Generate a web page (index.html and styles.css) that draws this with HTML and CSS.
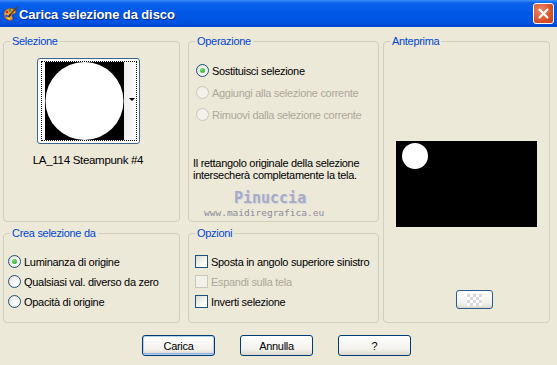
FILE: index.html
```html
<!DOCTYPE html>
<html lang="it">
  <head>
    <title>Carica selezione da disco</title>
    <meta charset="UTF-8" />
    <link rel="stylesheet" href="styles.css">
  </head>

  <body>
    <div class="window">
      <header class="titlebar">
        <span class="title-left">
          <svg class="app-icon" width="16" height="16" viewBox="0 0 16 16">
            <path d="M2 8 C2 3 9 1 13 4 C15 6 13 8 11 8 C9 8 10 11 11 12 C11 14 8 15 6 14 C3 13 2 11 2 8 Z" fill="#e8a050" stroke="#8a4a10" stroke-width="0.8"/>
            <circle cx="5" cy="6" r="1.3" fill="#e02020"/>
            <circle cx="8" cy="4.5" r="1.2" fill="#20a030"/>
            <circle cx="4.5" cy="10" r="1.3" fill="#2050e0"/>
            <circle cx="7" cy="12.2" r="1" fill="#f0e020"/>
            <path d="M15 1 L8 9" stroke="#704010" stroke-width="1.6"/>
            <path d="M8.5 8.5 L6.5 11" stroke="#303030" stroke-width="2"/>
          </svg>
          <span class="title">Carica selezione da disco</span>
        </span>
        <span class="close-btn">
          <svg width="13" height="13" viewBox="0 0 13 13">
            <path d="M2 2 L11 11 M11 2 L2 11" stroke="#fff" stroke-width="2.2"/>
          </svg>
        </span>
      </header>

      <div class="content">
        <div class="groups">
          <div class="group group-selezione">
            <span class="caption">Selezione</span>
            <div class="thumb">
              <div class="thumb-focus">
                <svg class="thumb-image" width="79" height="78" viewBox="0 0 79 78">
                  <rect width="79" height="78" fill="#000"/>
                  <circle cx="39.5" cy="39" r="39" fill="#fff"/>
                </svg>
                <span class="thumb-strip"><span class="thumb-arrow"></span></span>
              </div>
            </div>
            <div class="thumb-label">LA_114 Steampunk #4</div>
          </div>

          <div class="group group-operazione">
            <span class="caption">Operazione</span>
            <label class="option"><span class="radio checked"></span>Sostituisci selezione</label>
            <label class="option disabled"><span class="radio"></span>Aggiungi alla selezione corrente</label>
            <label class="option disabled"><span class="radio"></span>Rimuovi dalla selezione corrente</label>
            <p class="info">
              Il rettangolo originale della selezione<br />
              intersecherà completamente la tela.
            </p>
          </div>

          <div class="group group-anteprima">
            <span class="caption">Anteprima</span>
            <svg class="preview" width="141" height="86" viewBox="0 0 141 86">
              <rect width="141" height="86" fill="#000"/>
              <circle cx="19" cy="15" r="13" fill="#fff"/>
            </svg>
            <span class="xp-button preview-btn">
              <svg width="15" height="12" viewBox="0 0 15 12">
                <rect width="15" height="12" fill="#ffffff"/>
                <rect x="0" y="0" width="3" height="3" fill="#d8d8d8"/>
                <rect x="6" y="0" width="3" height="3" fill="#d8d8d8"/>
                <rect x="12" y="0" width="3" height="3" fill="#d8d8d8"/>
                <rect x="3" y="3" width="3" height="3" fill="#d8d8d8"/>
                <rect x="9" y="3" width="3" height="3" fill="#d8d8d8"/>
                <rect x="0" y="6" width="3" height="3" fill="#d8d8d8"/>
                <rect x="6" y="6" width="3" height="3" fill="#d8d8d8"/>
                <rect x="12" y="6" width="3" height="3" fill="#d8d8d8"/>
                <rect x="3" y="9" width="3" height="3" fill="#d8d8d8"/>
                <rect x="9" y="9" width="3" height="3" fill="#d8d8d8"/>
              </svg>
            </span>
          </div>

          <div class="group group-crea">
            <span class="caption">Crea selezione da</span>
            <label class="option"><span class="radio checked"></span>Luminanza di origine</label>
            <label class="option"><span class="radio"></span>Qualsiasi val. diverso da zero</label>
            <label class="option"><span class="radio"></span>Opacità di origine</label>
          </div>

          <div class="group group-opzioni">
            <span class="caption">Opzioni</span>
            <label class="option"><span class="check"></span>Sposta in angolo superiore sinistro</label>
            <label class="option disabled"><span class="check"></span>Espandi sulla tela</label>
            <label class="option"><span class="check"></span>Inverti selezione</label>
          </div>
        </div>

        <div class="buttons">
          <span class="xp-button default">Carica</span>
          <span class="xp-button">Annulla</span>
          <span class="xp-button">?</span>
        </div>
      </div>

      <div class="watermark">
        <span class="wm-name">Pinuccia</span>
        <span class="wm-site">www.maidiregrafica.eu</span>
      </div>
    </div>
  </body>
</html>
```

FILE: styles.css
```css
body {
  margin: 0;
  background: #ece9d8;
  font-family: "Liberation Sans", Arial, sans-serif;
  font-size: 11px;
  letter-spacing: -0.3px;
  color: #000;
}

.window {
  position: relative;
  width: 557px;
  height: 365px;
  overflow: hidden;
}

/* title bar */
.titlebar {
  box-sizing: border-box;
  height: 27px;
  display: flex;
  align-items: center;
  justify-content: space-between;
  padding: 0 3px 0 2px;
  background: linear-gradient(
    to bottom,
    #3d8ef8 0px,
    #0b61ec 3px,
    #0058e8 45%,
    #0052e0 85%,
    #0042cc 100%
  );
}

.title-left {
  display: flex;
  align-items: center;
}

.app-icon {
  margin-right: 1px;
  margin-top: 1px;
}

.title {
  color: #fff;
  font-weight: bold;
  font-size: 13px;
  letter-spacing: -0.1px;
  text-shadow: 1px 1px 0 #0a2a8a;
  margin-top: 1px;
}

.close-btn {
  box-sizing: border-box;
  width: 21px;
  height: 21px;
  border: 1px solid #fff;
  border-radius: 3px;
  background: radial-gradient(circle at 35% 35%, #f08a66, #d9532c 60%, #c2401e);
  display: flex;
  align-items: center;
  justify-content: center;
}

/* body */
.content {
  padding: 14px 7px 0 3px;
}

.groups {
  display: grid;
  grid-template-columns: 185px 195px 167px;
  grid-template-rows: 181px 90px;
  row-gap: 11px;
}

.group {
  position: relative;
  box-sizing: border-box;
  border: 1px solid #d0d0bf;
  border-radius: 4px;
}

.caption {
  position: absolute;
  top: -7px;
  left: 6px;
  padding: 0 2px;
  line-height: 13px;
  background: #ece9d8;
  color: #0046d5;
}

.group-selezione {
  width: 177px;
  display: flex;
  flex-direction: column;
  align-items: center;
  padding: 16px 7px 0 0;
}

.group-operazione {
  width: 191px;
  padding: 22px 0 0 7px;
}

.group-anteprima {
  grid-row: 1 / span 2;
  grid-column: 3;
  display: flex;
  flex-direction: column;
  align-items: flex-start;
  padding: 99px 0 0 12px;
}

.group-crea {
  width: 177px;
  padding: 21px 0 0 4px;
}

.group-opzioni {
  width: 191px;
  padding: 21px 0 0 6px;
}

/* selection thumbnail */
.thumb {
  box-sizing: border-box;
  width: 103px;
  height: 86px;
  border: 1px solid #3c6591;
  border-radius: 3px;
  background: #fff;
  padding: 2px 2px 2px 3px;
}

.thumb-focus {
  box-sizing: border-box;
  height: 100%;
  border: 1px dotted #000;
  display: flex;
  padding-left: 3px;
}

.thumb-image {
  display: block;
}

.thumb-strip {
  flex: 1;
  position: relative;
  background: linear-gradient(to right, #eeeeee, #fafafa);
}

.thumb-arrow {
  position: absolute;
  right: 1px;
  top: 36px;
  border-left: 3px solid transparent;
  border-right: 3px solid transparent;
  border-top: 3px solid #000;
}

.thumb-label {
  margin-top: 10px;
  line-height: 13px;
  font-size: 11.5px;
}

/* radios and checkboxes */
.option {
  display: flex;
  align-items: center;
  height: 13px;
  gap: 3px;
  margin-bottom: 7px;
}

.group-operazione .option {
  margin-bottom: 9px;
}

.option.disabled {
  color: #aca899;
}

.radio {
  box-sizing: border-box;
  width: 13px;
  height: 13px;
  border-radius: 50%;
  border: 1px solid #1c5180;
  background: radial-gradient(circle at 65% 65%, #ffffff 20%, #e4e2da 80%, #d0cdc0);
  display: flex;
  align-items: center;
  justify-content: center;
}

.radio.checked::after {
  content: "";
  width: 5px;
  height: 5px;
  border-radius: 50%;
  background: radial-gradient(circle at 35% 35%, #6fe06f, #21a121);
}

.disabled .radio,
.disabled .check {
  border-color: #cac8bb;
  background: #f2f1ea;
}

.check {
  box-sizing: border-box;
  width: 13px;
  height: 13px;
  border: 1px solid #1c5180;
  background: linear-gradient(135deg, #dcdbd3, #ffffff 80%);
}

.info {
  margin: 36px 0 0 -3px;
  line-height: 12px;
}

/* buttons */
.xp-button {
  box-sizing: border-box;
  display: flex;
  align-items: center;
  justify-content: center;
  width: 73px;
  height: 21px;
  border: 1px solid #003c74;
  border-radius: 3px;
  background: linear-gradient(to bottom, #ffffff, #f2f1ec 70%, #dcd8cb);
}

.xp-button.default {
  box-shadow: inset 0 0 0 1px #b8cff2, inset 0 -1px 0 1px #8fb1e6;
}

.buttons {
  display: flex;
  gap: 25px;
  margin: 12px 0 0 139px;
}

.preview {
  display: block;
}

.preview-btn {
  width: 37px;
  height: 19px;
  margin: 63px 0 0 60px;
  border-color: #2c5b8e;
}

/* watermark over the dialog */
.watermark {
  position: absolute;
  left: 204px;
  top: 190px;
  display: flex;
  flex-direction: column;
  align-items: center;
  letter-spacing: 0;
  pointer-events: none;
}

.wm-name {
  font-family: "DejaVu Sans Mono", monospace;
  font-weight: bold;
  font-size: 15px;
  line-height: 17px;
  color: #a7abc6;
  text-shadow: 1px 1px 0 #d6d4e0;
  margin-left: 12px;
}

.wm-site {
  font-family: "DejaVu Sans Mono", monospace;
  font-size: 9.5px;
  line-height: 11px;
  color: #8c8c98;
}
```
